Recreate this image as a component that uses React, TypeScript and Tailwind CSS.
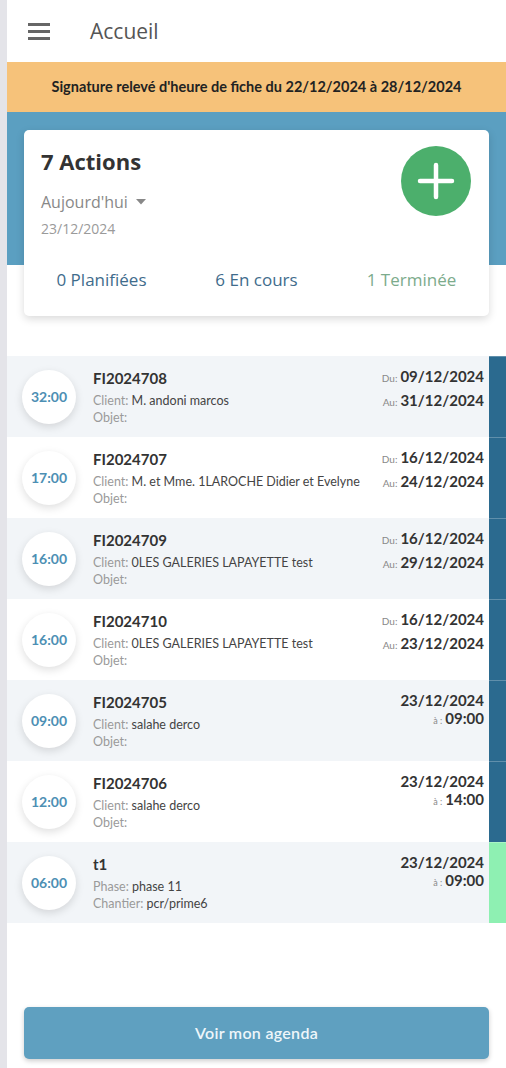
import React from "react";

type Row = {
  time: string;
  code: string;
  l1: [string, string];
  l2: [string, string];
  range?: [string, string];
  day?: string;
  at?: string;
  done?: boolean;
};

const rows: Row[] = [
  { time: "32:00", code: "FI2024708", l1: ["Client:", "M. andoni marcos"], l2: ["Objet:", ""], range: ["09/12/2024", "31/12/2024"] },
  { time: "17:00", code: "FI2024707", l1: ["Client:", "M. et Mme. 1LAROCHE Didier et Evelyne"], l2: ["Objet:", ""], range: ["16/12/2024", "24/12/2024"] },
  { time: "16:00", code: "FI2024709", l1: ["Client:", "0LES GALERIES LAPAYETTE test"], l2: ["Objet:", ""], range: ["16/12/2024", "29/12/2024"] },
  { time: "16:00", code: "FI2024710", l1: ["Client:", "0LES GALERIES LAPAYETTE test"], l2: ["Objet:", ""], range: ["16/12/2024", "23/12/2024"] },
  { time: "09:00", code: "FI2024705", l1: ["Client:", "salahe derco"], l2: ["Objet:", ""], day: "23/12/2024", at: "09:00" },
  { time: "12:00", code: "FI2024706", l1: ["Client:", "salahe derco"], l2: ["Objet:", ""], day: "23/12/2024", at: "14:00" },
  { time: "06:00", code: "t1", l1: ["Phase:", "phase 11"], l2: ["Chantier:", "pcr/prime6"], day: "23/12/2024", at: "09:00", done: true },
];

function ActionRow({ r, i }: { r: Row; i: number }) {
  const bg = i % 2 === 0 ? "bg-[#f2f5f8]" : "bg-white";
  return (
    <div className={`flex h-[81px] ${bg}`}>
      <div className="flex w-[86px] shrink-0 items-center pl-[15px]">
        <div className="flex h-[54px] w-[54px] items-center justify-center rounded-full bg-white shadow-[0_3px_8px_rgba(0,0,0,0.13)]">
          <span className="text-[14px] font-bold text-[#4d8fb4]">{r.time}</span>
        </div>
      </div>
      <div className="min-w-0 flex-1 pt-[11px]">
        <p className="text-[15px] font-bold leading-[22px] text-[#333]">{r.code}</p>
        <p className="mt-[3px] truncate text-[12.5px] leading-[18px] text-[#444]">
          <span className="text-[#9a9a9a]">{r.l1[0]}</span> {r.l1[1]}
        </p>
        <p className="text-[12.5px] leading-[16px] text-[#444]">
          <span className="text-[#9a9a9a]">{r.l2[0]}</span> {r.l2[1]}
        </p>
      </div>
      <div className="flex shrink-0 flex-col items-end pl-[4px] pr-[5px] pt-[9px]">
        {r.range ? (
          <>
            <p className="text-[15px] font-bold leading-[22px] text-[#333]">
              <span className="mr-[3px] text-[10px] font-normal text-[#888]">Du:</span>
              {r.range[0]}
            </p>
            <p className="text-[15px] font-bold leading-[22px] text-[#333]">
              <span className="mr-[3px] text-[10px] font-normal text-[#888]">Au:</span>
              {r.range[1]}
            </p>
          </>
        ) : (
          <>
            <p className="text-[15px] font-bold leading-[22px] text-[#333]">{r.day}</p>
            <p className="mt-[-4px] text-[15px] font-bold leading-[22px] text-[#333]">
              <span className="mr-[3px] text-[9px] font-normal text-[#888]">à :</span>
              {r.at}
            </p>
          </>
        )}
      </div>
      <div
        className={`w-[17px] shrink-0 border-t border-white/25 ${r.done ? "bg-[#8ef0b2]" : "bg-[#2b6a8f]"}`}
      />
    </div>
  );
}

export default function App() {
  return (
    <div className="flex min-h-[1068px] bg-white font-['Lato',sans-serif]">
      <div className="w-[7px] shrink-0 bg-[#e4e4e9]" />
      <div className="flex min-w-0 flex-1 flex-col">
        <header className="flex h-[62px] items-center bg-white pl-[21px]">
          <div className="flex w-[22px] flex-col gap-[4px]">
            <span className="h-[3px] bg-[#666]" />
            <span className="h-[3px] bg-[#666]" />
            <span className="h-[3px] bg-[#666]" />
          </div>
          <h1 className="ml-[40px] mt-[2px] font-['Open_Sans',sans-serif] text-[21px] text-[#555]">Accueil</h1>
        </header>

        <div className="flex h-[50px] items-center justify-center bg-[#f6c27a]">
          <p className="text-[14.5px] font-bold text-[#222]">
            Signature relevé d'heure de fiche du 22/12/2024 à 28/12/2024
          </p>
        </div>

        <div className="bg-[linear-gradient(to_bottom,#5b9fc1_153px,#ffffff_153px)] px-[17px] pt-[18px]">
          <div className="h-[186px] rounded-[5px] bg-white font-['Open_Sans',sans-serif] shadow-[0_3px_8px_rgba(0,0,0,0.15)]">
            <div className="flex justify-between pl-[17px] pr-[18px] pt-[16px]">
              <div>
                <p className="text-[22px] font-bold leading-[30px] text-[#333]">7 Actions</p>
                <p className="mt-[15px] flex items-center text-[16px] leading-[22px] text-[#888]">
                  Aujourd'hui
                  <svg width="10" height="6" viewBox="0 0 10 6" className="ml-[8px]">
                    <path d="M0 0h10L5 5.5z" fill="#888" />
                  </svg>
                </p>
                <p className="mt-[5px] text-[14px] text-[#9a9a9a]">23/12/2024</p>
              </div>
              <div className="flex h-[70px] w-[70px] items-center justify-center rounded-full bg-[#4caf6c]">
                <svg width="38" height="38" viewBox="0 0 38 38">
                  <path d="M19 3v32M3 19h32" stroke="#fff" strokeWidth="4.5" strokeLinecap="round" />
                </svg>
              </div>
            </div>
            <div className="mt-[28px] grid grid-cols-3 text-center text-[17px]">
              <span className="text-[#3f6c8c]">0 Planifiées</span>
              <span className="text-[#3f6c8c]">6 En cours</span>
              <span className="text-[#7cab8c]">1 Terminée</span>
            </div>
          </div>
        </div>

        <div className="mt-[40px]">
          {rows.map((r, i) => (
            <ActionRow key={r.code} r={r} i={i} />
          ))}
        </div>

        <div className="mt-auto px-[17px] pb-[9px]">
          <button className="h-[52px] w-full rounded-[5px] bg-[#5fa0c0] text-[16px] font-semibold tracking-[0.3px] text-[#eef6fa] shadow-[0_2px_5px_rgba(0,0,0,0.2)]">
            Voir mon agenda
          </button>
        </div>
      </div>
    </div>
  );
}
